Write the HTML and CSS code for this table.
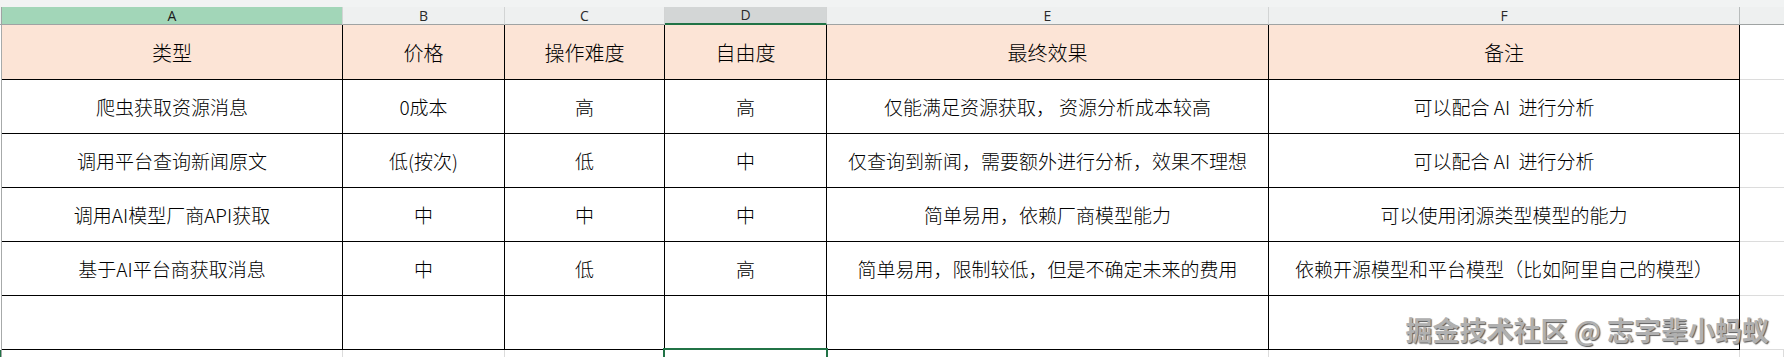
FILE: index.html
```html
<!DOCTYPE html>
<html lang="zh-CN">
<head>
<meta charset="utf-8">
<title>Sheet</title>
<link rel="stylesheet" href="styles.css">
</head>
<body>
<div class="page">
  <div class="topband"></div>
  <div class="sheet">
    <div class="ch gut"></div>
    <div class="ch sel-col">A</div>
    <div class="ch">B</div>
    <div class="ch">C</div>
    <div class="ch cur-col">D</div>
    <div class="ch">E</div>
    <div class="ch">F</div>
    <div class="ch ch-last"></div>

    <div class="gut"></div>
    <div class="c hd">类型</div>
    <div class="c hd">价格</div>
    <div class="c hd">操作难度</div>
    <div class="c hd">自由度</div>
    <div class="c hd">最终效果</div>
    <div class="c hd">备注</div>
    <div class="x"></div>

    <div class="gut"></div>
    <div class="c">爬虫获取资源消息</div>
    <div class="c">0成本</div>
    <div class="c">高</div>
    <div class="c">高</div>
    <div class="c">仅能满足资源获取， 资源分析成本较高</div>
    <div class="c">可以配合 AI  进行分析</div>
    <div class="x"></div>

    <div class="gut"></div>
    <div class="c">调用平台查询新闻原文</div>
    <div class="c">低(按次)</div>
    <div class="c">低</div>
    <div class="c">中</div>
    <div class="c">仅查询到新闻，需要额外进行分析，效果不理想</div>
    <div class="c">可以配合 AI  进行分析</div>
    <div class="x"></div>

    <div class="gut"></div>
    <div class="c">调用AI模型厂商API获取</div>
    <div class="c">中</div>
    <div class="c">中</div>
    <div class="c">中</div>
    <div class="c">简单易用，依赖厂商模型能力</div>
    <div class="c">可以使用闭源类型模型的能力</div>
    <div class="x"></div>

    <div class="gut"></div>
    <div class="c">基于AI平台商获取消息</div>
    <div class="c">中</div>
    <div class="c">低</div>
    <div class="c">高</div>
    <div class="c">简单易用，限制较低，但是不确定未来的费用</div>
    <div class="c">依赖开源模型和平台模型（比如阿里自己的模型）</div>
    <div class="x"></div>

    <div class="gut"></div>
    <div class="c"></div>
    <div class="c"></div>
    <div class="c"></div>
    <div class="c"></div>
    <div class="c"></div>
    <div class="c"></div>
    <div class="x"></div>

    <div class="gut gut-sel"></div>
    <div class="e"></div>
    <div class="e"></div>
    <div class="e"></div>
    <div class="e"></div>
    <div class="e"></div>
    <div class="e"></div>
    <div class="e"></div>
  </div>
  <div class="selection"></div>
  <div class="watermark">掘金技术社区 @ 志字辈小蚂蚁</div>
</div>
</body>
</html>
```
FILE: styles.css
```css
html, body {
  margin: 0;
  padding: 0;
  background: #ffffff;
  overflow: hidden;
}
.page {
  position: relative;
  width: 1784px;
  height: 357px;
  overflow: hidden;
  font-family: "Noto Sans CJK SC", "Noto Sans", sans-serif;
  color: #111;
}
.topband {
  height: 7px;
  background: #f1f3f3;
}
.sheet {
  display: grid;
  grid-template-columns: 2px 341px 162px 160px 162px 442px 471px 44px;
  grid-template-rows: 18px 55px 54px 54px 54px 54px 54px 20px;
}
.ch {
  box-sizing: border-box;
  background: #eef0f0;
  border-right: 1px solid #d2d4d4;
  border-bottom: 1px solid #9fa3a3;
  font-family: "Open Sans", "Noto Sans", sans-serif;
  font-size: 14px;
  color: #2a2a2a;
  display: flex;
  align-items: center;
  justify-content: center;
  line-height: 1;
}
.ch.sel-col {
  background: #a2d6b8;
  color: #1a1a1a;
}
.ch.cur-col {
  background: #d3d6d6;
  border-bottom: 2px solid #217346;
}
.ch.gut {
  border-right: 1px solid #9fa3a3;
  background: #eef0f0;
}
.ch.ch-last {
  border-right: none;
  border-left: 1px solid #b8bcbc;
  margin-left: -1px;
}
.gut {
  box-sizing: border-box;
  border-right: 1px solid #a7aaaa;
  background: #fff;
}
.gut.gut-sel {
  background: #217346;
}
.c {
  box-sizing: border-box;
  border-right: 1px solid #000;
  border-bottom: 1px solid #000;
  display: flex;
  align-items: center;
  justify-content: center;
  font-size: 19px;
  font-weight: 300;
  color: #000;
  white-space: pre;
  line-height: 1;
  padding-bottom: 1px;
}
.c.hd {
  background: #fce4d6;
  font-size: 20px;
  padding-top: 2px;
}
.x {
  box-sizing: border-box;
  border-bottom: 1px solid #dcdcdc;
}
.e {
  box-sizing: border-box;
  border-right: 1px solid #dcdcdc;
}
.selection {
  position: absolute;
  left: 663px;
  top: 348px;
  width: 165px;
  height: 30px;
  box-sizing: border-box;
  border: 2px solid #217346;
}
.watermark {
  position: absolute;
  right: 15px;
  top: 313px;
  font-size: 27px;
  font-weight: 700;
  line-height: 34px;
  white-space: nowrap;
  color: #b0b0b0;
  text-shadow: 1px 1px 1px rgba(50, 50, 50, 0.8), -1px -1px 0 rgba(255, 255, 255, 0.9);
}
```
